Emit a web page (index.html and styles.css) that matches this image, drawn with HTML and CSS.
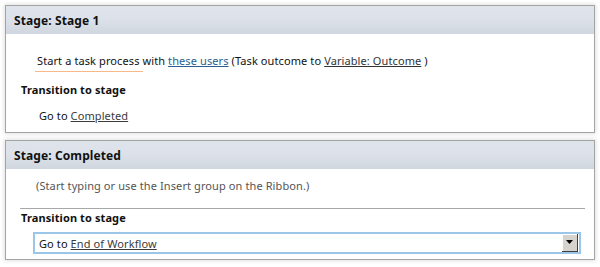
FILE: index.html
```html
<!DOCTYPE html>
<html>
<head>
<meta charset="utf-8">
<link rel="stylesheet" href="styles.css">
</head>
<body>
<div class="page">
  <section class="stage stage-one">
    <div class="stage-head">Stage: Stage 1</div>
    <div class="stage-body">
      <div class="action-line"><span class="action-mark">Start a task process</span> with <a class="link blue">these users</a> (Task outcome to <a class="link dark">Variable: Outcome</a> )</div>
      <div class="trans-title">Transition to stage</div>
      <div class="goto">Go to <a class="link gray">Completed</a></div>
    </div>
  </section>
  <section class="stage stage-two">
    <div class="stage-head">Stage: Completed</div>
    <div class="stage-body">
      <div class="hint">(Start typing or use the Insert group on the Ribbon.)</div>
      <div class="divider"></div>
      <div class="trans-title t2">Transition to stage</div>
      <div class="select-row">
        <div class="select-text">Go to <a class="link gray">End of Workflow</a></div>
        <div class="select-btn"><svg width="9" height="5" viewBox="0 0 9 5"><path d="M1 0h7L4.5 4z" fill="#000"/></svg></div>
      </div>
    </div>
  </section>
</div>
</body>
</html>
```
FILE: styles.css
```css
html, body { margin: 0; padding: 0; background: #fff; }
body {
  font-family: "Noto Sans", "Open Sans", sans-serif;
  font-size: 11px;
  letter-spacing: 0.1px;
  color: #111;
}
.page {
  width: 600px;
  height: 267px;
  padding: 5px 5px 0 5px;
  box-sizing: border-box;
  display: flex;
  flex-direction: column;
  gap: 7px;
  background: #fff;
}
.stage {
  border: 1px solid #a4a4a4;
  background: #fff;
  box-shadow: 0 0 4px 1px rgba(0,0,0,0.12);
}
.stage-head {
  height: 28px;
  line-height: 30px;
  padding-left: 8px;
  font-weight: bold;
  font-size: 12px;
  color: #111;
  background: linear-gradient(#dfe3ea 0%, #dde2ea 45%, #d0d6df 100%);
}
.stage-one .stage-body { height: 98px; padding-top: 16px; box-sizing: border-box; }
.action-line { padding-left: 31px; height: 22px; line-height: 20px; }
.action-mark {
  display: inline-block;
  padding: 0 3px 0 2px;
  margin: 0 -3px 0 -2px;
  border-bottom: 1px solid #f7b98a;
  line-height: 21px;
}
.trans-title { font-weight: bold; padding-left: 15px; margin-top: 10px; line-height: 16px; }
.goto { padding-left: 33px; margin-top: 10px; line-height: 16px; }
.link { text-decoration: underline; }
.link.blue { color: #2b5d8f; }
.link.dark { color: #333; }
.link.gray { color: #3c3c3c; }
.stage-two .stage-body { height: 90px; padding-top: 9px; box-sizing: border-box; }
.hint { padding-left: 30px; color: #555; line-height: 16px; }
.divider { height: 1px; background: #a8a8a8; margin: 14px 9px 0 14px; }
.trans-title.t2 { margin-top: 1px; }
.select-row {
  margin: 6px 0 0 27px;
  width: 548px;
  height: 22px;
  border: 2px solid #9cc6e8;
  box-sizing: border-box;
  display: flex;
  align-items: center;
  justify-content: space-between;
}
.select-text { padding-left: 4px; }
.select-btn {
  width: 16px;
  height: 18px;
  background: #d6d3ce;
  border-right: 1px solid #404040;
  border-bottom: 1px solid #404040;
  box-shadow: inset 1px 1px 0 #fff;
  display: flex;
  align-items: center;
  justify-content: center;
  box-sizing: border-box;
  margin-right: 1px;
}
```
